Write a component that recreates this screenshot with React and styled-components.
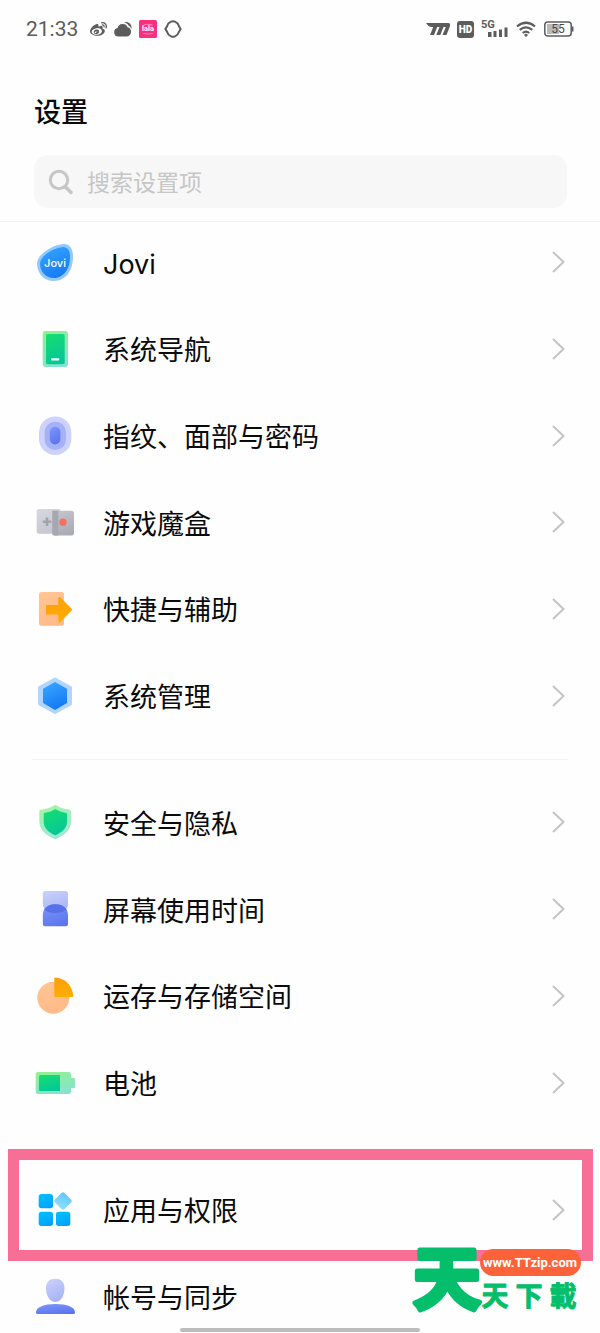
import styled, { createGlobalStyle } from 'styled-components';
import { FaWeibo } from 'react-icons/fa';

const GlobalStyle = createGlobalStyle`
  * {
    box-sizing: border-box;
  }
  body {
    margin: 0;
    background: #fefefe;
    color: #0a0a0a;
    font-family: Roboto, "Noto Sans CJK SC", sans-serif;
  }
`
const Screen = styled.div`
  position: relative;
  height: 100vh;
  overflow: hidden;
  background: #fefefe;
`
const StatusBar = styled.div`
  display: flex;
  justify-content: space-between;
  align-items: center;
  height: 58px;
  padding: 0 26px;
  color: #5c5c5c;
`
const StatusGroup = styled.div`
  display: flex;
  align-items: center;
  gap: 7px;
`
const Clock = styled.time`
  margin-right: 5px;
  font-size: 21px;
  line-height: 24px;
`
const Header = styled.header`
  position: relative;
  z-index: 1;
  border-bottom: 1px solid #f3f3f3;
  background: #fefefe;
`
const Title = styled.h1`
  margin: 0;
  padding: 36px 34px 0;
  font-size: 27px;
  line-height: 38px;
  font-weight: 500;
`
const SearchBox = styled.label`
  display: flex;
  align-items: center;
  gap: 13px;
  height: 53px;
  margin: 23px 33px 13px 34px;
  padding: 0 14px;
  border-radius: 14px;
  background: #f7f7f7;
`
const SearchInput = styled.input`
  flex: 1;
  min-width: 0;
  padding: 4px 0 0;
  border: none;
  outline: none;
  background: transparent;
  font-family: inherit;
  font-size: 23px;
  line-height: 34px;
  &::placeholder {
    color: #c6c6c6;
    opacity: 1;
  }
`
const Settings = styled.main`
  margin-top: -3px;
`
const Group = styled.ul`
  display: grid;
  grid-auto-rows: 1fr;
  min-height: ${props => props.$height}px;
  margin: 0;
  padding: 0;
  list-style: none;
`
const Divider = styled.hr`
  height: 1px;
  margin: 20px 32px 19px;
  border: none;
  background: ${props => props.$hidden ? 'transparent' : '#f3f3f3'};
`
const Item = styled.li`
  position: relative;
  display: grid;
`
const ItemLink = styled.a`
  display: flex;
  align-items: center;
  padding: 0 34px 0 33px;
  color: inherit;
  text-decoration: none;
`
const ItemLabel = styled.span`
  flex: 1;
  margin-left: 26px;
  padding-top: 5px;
  font-family: Inter, "Noto Sans CJK SC", sans-serif;
  font-size: 27px;
  line-height: 40px;
`
const Highlight = styled.div`
  position: absolute;
  inset: -17px 7px -8px 8px;
  border: 11px solid #f76f95;
  pointer-events: none;
`
const HomeBar = styled.div`
  position: absolute;
  bottom: 1px;
  left: 30%;
  right: 30%;
  height: 4px;
  border-radius: 2px;
  background: #bdbdbd;
`
const Watermark = styled.svg`
  position: absolute;
  right: 14px;
  bottom: 0;
  overflow: visible;
`

const IconDefs = () => {
  const gradients = [
    ['blue', '#35a2ff', '#1479f5'],
    ['blueSoft', '#8ccbff', '#9cc6fb'],
    ['green', '#16dc72', '#04c59b'],
    ['greenSoft', '#8ff094', '#86e2cf'],
    ['violet', '#7b93f8', '#5b74ee'],
    ['violetSoft', '#c9cffa', '#a5b2f8'],
    ['grey', '#d5d6de', '#c4c5ce'],
    ['greyDark', '#c3c4cc', '#a9aab4'],
    ['peach', '#ffc592', '#ffb989'],
    ['orange', '#fc9f0c', '#ffae00'],
    ['cyan', '#00befb', '#00a1fb'],
    ['sky', '#65c6fb', '#8ce0fb']
  ];
  return <svg width='0' height='0' style={{ position: 'absolute' }} aria-hidden='true'>
    <defs>
      {gradients.map(([id, from, to]) => <linearGradient key={id} id={id} x1='0.3' y1='0' x2='0.7' y2='1'>
        <stop offset='0' stopColor={from} />
        <stop offset='1' stopColor={to} />
      </linearGradient>)}
    </defs>
  </svg>
}

const icons = {
  jovi: <>
    <path d='M4 23C4 16 17 5 31 4c6 0 9 5 9 13 0 13-7 24-19 24C10 41 4 33 4 23z' fill='url(#blueSoft)' />
    <path d='M7 23.500C7 17 19 8 30 7c5 0 7 4 7 10 0 11-6 21-16 21-9 0-14-7-14-14.500z' fill='url(#blue)' />
    <text x='22' y='27' textAnchor='middle' fontFamily='Inter, sans-serif' fontSize='11' fontWeight='500' fill='#fff'>Jovi</text>
  </>,
  navigation: <>
    <rect x='9.700' y='4' width='25.300' height='36' rx='3' fill='url(#greenSoft)' />
    <rect x='13' y='7' width='18.700' height='30.300' rx='2' fill='url(#green)' />
    <rect x='18' y='31.300' width='8.300' height='2.200' rx='1' fill='#f2fff9' />
  </>,
  fingerprint: <>
    <rect x='6' y='2.500' width='32.300' height='38.500' rx='16' fill='#ccd2fb' />
    <rect x='11.700' y='7.700' width='21.300' height='28.300' rx='10.600' fill='#a5b2f9' />
    <rect x='16.700' y='12.700' width='10.700' height='17.700' rx='5.300' fill='url(#violet)' />
  </>,
  game: <>
    <rect x='3.700' y='9' width='24' height='24.700' rx='2.500' fill='url(#grey)' />
    <path d='M19.300 10.700H38.500a2.500 2.500 0 0 1 2.500 2.500V33a2.500 2.500 0 0 1-2.500 2.500H21.500a2.200 2.200 0 0 1-2.200-2.200z' fill='url(#greyDark)' />
    <path d='M19.300 10.700h6v24.800h-3.800a2.200 2.200 0 0 1-2.200-2.200z' fill='#a6a7b3' />
    <path d='M14 17.500v8.500M9.800 21.700h8.500' stroke='#a2a3ae' strokeWidth='2.600' />
    <circle cx='30' cy='22.300' r='3.700' fill='#f7705f' />
  </>,
  shortcut: <>
    <rect x='6' y='5' width='25' height='33.700' rx='2.500' fill='url(#peach)' />
    <path d='M14 18h11.300v-6.500c0-1.500 1.200-1.900 2.200-1l11.200 11.300c.6.600.6 1.200 0 1.800L27.500 35c-1 .9-2.200.5-2.200-1v-6.600H14c-.6 0-1-.4-1-1V19c0-.6.4-1 1-1z' fill='url(#orange)' />
  </>,
  system: <>
    <path d='M22 5L37.500 13.500V30L22 38.500 6.500 30V13.500z' fill='#b3d5fd' stroke='#b3d5fd' strokeWidth='3' strokeLinejoin='round' />
    <path d='M22 9L33 15.300V28.500L22 35 11 28.500V15.300z' fill='url(#blue)' stroke='url(#blue)' strokeWidth='2' strokeLinejoin='round' />
  </>,
  security: <>
    <path d='M22.300 4.700C26 7.500 31 9 36.300 9.500q1.800.3 1.800 2V21c0 9-6.500 14.500-15.800 18.300C13 35.500 6.300 30 6.300 21v-9.500q0-1.700 1.800-2C13.500 9 18.500 7.500 22.300 4.700z' fill='url(#greenSoft)' opacity='0.800' />
    <path d='M22.300 9c3 2 6.500 3.200 10.500 3.700q1.200.2 1.200 1.500v7.500c0 6.500-5 10.500-11.700 13.600C15.600 32.200 10.700 28.200 10.700 21.700v-7.500q0-1.300 1.200-1.500c4-.5 7.400-1.700 10.400-3.700z' fill='url(#green)' />
  </>,
  screenTime: <>
    <path d='M12.500 4H32.500a2.500 2.500 0 0 1 2.500 2.500V17c0 5.500-5.500 9-12.600 9S9.800 22.500 9.800 17V6.500A2.500 2.500 0 0 1 12.500 4z' fill='url(#violetSoft)' />
    <path d='M9.800 28.500C9.800 21 15 17.300 22.400 17.300S35 21 35 28.500v8.300a2.500 2.500 0 0 1-2.500 2.500H12.300a2.500 2.500 0 0 1-2.500-2.500z' fill='url(#violet)' />
    <path d='M11.300 22.500C13.500 19 17.500 17.300 22.400 17.300s8.900 1.700 11.100 5.200C31.300 25 27.300 26 22.400 26s-8.900-1-11.100-3.500z' fill='#5871e9' />
  </>,
  storage: <>
    <circle cx='20.300' cy='23.700' r='16' fill='url(#peach)' />
    <path d='M21.300 4.500q0-1 1-1C32 4 39.500 11.500 40.300 22q0 1-1 1h-17q-1 0-1-1z' fill='url(#orange)' />
  </>,
  battery: <>
    <path d='M5.200 11H35.500a2.500 2.500 0 0 1 2.500 2.500v3.200h2.500a1.500 1.500 0 0 1 1.500 1.500v7.600a1.500 1.500 0 0 1-1.500 1.500H38v3.200a2.500 2.500 0 0 1-2.500 2.500H5.200a2.500 2.500 0 0 1-2.500-2.500v-17A2.500 2.500 0 0 1 5.200 11z' fill='url(#greenSoft)' />
    <path d='M7.500 14H27v16H7.500A1.500 1.500 0 0 1 6 28.500v-13A1.500 1.500 0 0 1 7.500 14z' fill='url(#green)' />
  </>,
  apps: <>
    <rect x='5.700' y='6' width='14.300' height='14.300' rx='2.700' fill='url(#cyan)' />
    <rect x='5.700' y='23.700' width='14.300' height='14.300' rx='2.700' fill='url(#cyan)' />
    <rect x='23' y='23.700' width='14.300' height='14.300' rx='2.700' fill='url(#cyan)' />
    <rect x='23.200' y='6.200' width='13.600' height='13.600' rx='2.200' fill='url(#sky)' transform='rotate(45 30 13)' />
  </>,
  account: <>
    <path d='M22.300 3.700c5.500 0 9.200 3 9.200 9.300C31.500 21 27.500 27 22.300 27S13 21 13 13c0-6.300 3.800-9.300 9.300-9.300z' fill='url(#violetSoft)' />
    <path d='M3 37.500C3 32 11 29 22.500 29S42 32 42 37.500q0 1.500-1.500 1.500h-36Q3 39 3 37.500z' fill='url(#violet)' />
  </>
};

const groups = [
  {
    height: 520,
    items: [
      { icon: 'jovi', label: 'Jovi' },
      { icon: 'navigation', label: '系统导航' },
      { icon: 'fingerprint', label: '指纹、面部与密码' },
      { icon: 'game', label: '游戏魔盒' },
      { icon: 'shortcut', label: '快捷与辅助' },
      { icon: 'system', label: '系统管理' }
    ]
  },
  {
    height: 347,
    items: [
      { icon: 'security', label: '安全与隐私' },
      { icon: 'screenTime', label: '屏幕使用时间' },
      { icon: 'storage', label: '运存与存储空间' },
      { icon: 'battery', label: '电池' }
    ]
  },
  {
    height: 174,
    items: [
      { icon: 'apps', label: '应用与权限', highlighted: true },
      { icon: 'account', label: '帐号与同步' }
    ]
  }
];

const Chevron = () => <svg width='15' height='24' viewBox='0 0 15 24' fill='none' aria-hidden='true'>
  <path d='M2 2l10.500 10L2 22' stroke='#c4c4c4' strokeWidth='2' />
</svg>

const SettingItem = ({ icon, label, highlighted }) => <Item>
  <ItemLink href='#'>
    <svg width='44' height='44' viewBox='0 0 44 44' aria-hidden='true'>{icons[icon]}</svg>
    <ItemLabel>{label}</ItemLabel>
    <Chevron />
  </ItemLink>
  {highlighted && <Highlight />}
</Item>

const StatusIcons = () => <>
  <StatusGroup>
    <Clock>21:33</Clock>
    <FaWeibo size={17} />
    <svg width='18' height='18' viewBox='0 0 18 18' fill='currentColor'>
      <path d='M4.500 16.500A4.300 4.300 0 0 1 3.600 8 5.200 5.200 0 0 1 13.500 7.300a4.700 4.700 0 0 1-.5 9.200z' />
      <path d='M10 2.300c4-1.500 8.300 1.300 7.500 6.700-.6-1.500-1.500-2.600-2.700-3.200-.9-1.900-2.600-3.200-4.800-3.500z' />
    </svg>
    <svg width='18' height='18' viewBox='0 0 17 17'>
      <rect width='17' height='17' rx='1.500' fill='#fa2f7d' />
      <path d='M4 5.200q4.500-2.200 9 0M4 12.500q4.500 1.500 9 0' stroke='#ff86b5' strokeWidth='1' fill='none' />
      <text x='8.500' y='10.800' textAnchor='middle' fontSize='7' fontWeight='700' fill='#fff'>lala</text>
    </svg>
    <svg width='18' height='18' viewBox='0 0 18 18' fill='none' stroke='currentColor' strokeWidth='2'>
      <path d='M7 1.700Q9 .7 11 1.700Q14 3 15 6.300L16.600 9 15 11.700Q14 15 11 16.300Q9 17.300 7 16.300Q4 15 3 11.700L1.400 9 3 6.300Q4 3 7 1.700z' />
    </svg>
  </StatusGroup>
  <StatusGroup>
    <svg width='24' height='14' viewBox='0 0 24 14' fill='currentColor'>
      <path d='M0 1H22Q25 1 24 4L20.500 13H16.500L19.800 5H17.500L14.300 13H10.300L13.500 5H11.200L8 13H4L7.200 5H5Q2 4.500 0 1z' />
    </svg>
    <svg width='17' height='17' viewBox='0 0 17 17'>
      <rect width='17' height='17' rx='3' fill='currentColor' />
      <text x='8.500' y='12.200' textAnchor='middle' fontSize='10' fontWeight='900' fill='#fff'>HD</text>
    </svg>
    <svg width='28' height='20' viewBox='0 0 28 20' fill='currentColor'>
      <text x='0' y='9' fontSize='11' fontWeight='700'>5G</text>
      <path d='M7 13h3.500v5H7zM12.500 12h3v6h-3zM18 10.500h3v7.500h-3zM23.500 8.500h3v9.500h-3z' />
    </svg>
    <svg width='20' height='16' viewBox='0 0 20 16' fill='none' stroke='currentColor' strokeWidth='2.200'>
      <path d='M1 5.500q9-7.500 18 0M3.800 8.900q6.200-5.200 12.400 0M6.700 12q3.300-2.700 6.600 0' />
      <path d='M10 12.500l2 1.500-2 2-2-2z' fill='currentColor' stroke='none' />
    </svg>
    <svg width='31' height='16' viewBox='0 0 31 16'>
      <rect x='1.800' y='1' width='26.400' height='14' rx='3' fill='none' stroke='currentColor' strokeWidth='1.500' />
      <rect x='4' y='3' width='12' height='10' fill='#b9b9b9' />
      <path d='M29 5.500h1.500v5H29z' fill='currentColor' />
      <text x='15' y='12.300' textAnchor='middle' fontSize='12' fill='#4a4a4a'>55</text>
    </svg>
  </StatusGroup>
</>

const SiteMark = () => <Watermark width='174' height='110' viewBox='0 0 174 110' fontFamily='"Noto Sans CJK TC", sans-serif' fontWeight='700'>
  <g fill='#04be6c' stroke='#04be6c' strokeLinejoin='round' textAnchor='middle'>
    <text x='35' y='81' fontSize='68' strokeWidth='5'>天</text>
    <text x='83' y='83' fontSize='27' strokeWidth='1'>天</text>
    <text x='117' y='83' fontSize='27' strokeWidth='1'>下</text>
    <text x='151' y='83' fontSize='27' strokeWidth='1'>載</text>
  </g>
  <rect x='68' y='26' width='101' height='27' rx='13.500' fill='#fe6239' />
  <text x='118' y='44' textAnchor='middle' fontSize='13' fill='#fff' fontFamily='Roboto, sans-serif'>www.TTzip.com</text>
</Watermark>

const App = () => {
  return <Screen>
    <GlobalStyle />
    <IconDefs />
    <Header>
      <StatusBar><StatusIcons /></StatusBar>
      <Title>设置</Title>
      <SearchBox htmlFor='search'>
        <svg width='26' height='26' viewBox='0 0 26 26' fill='none' stroke='#c6c6c6' strokeWidth='3' aria-hidden='true'>
          <circle cx='11' cy='11' r='8.700' />
          <path d='M17.500 18l5.500 5.500' strokeWidth='3.500' strokeLinecap='round' />
        </svg>
        <SearchInput id='search' type='text' placeholder='搜索设置项' aria-label='搜索设置项' />
      </SearchBox>
    </Header>
    <Settings>
      {groups.map((group, index) => <section key={group.height}>
        {index > 0 && <Divider $hidden={index > 1} />}
        <Group $height={group.height}>
          {group.items.map(item => <SettingItem key={item.icon} {...item} />)}
        </Group>
      </section>)}
    </Settings>
    <HomeBar />
    <SiteMark />
  </Screen>
}
export default App;
